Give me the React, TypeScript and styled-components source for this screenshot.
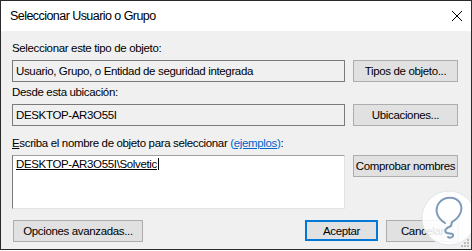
import React from 'react';
import styled, { createGlobalStyle } from 'styled-components';

const GlobalStyle = createGlobalStyle`
  html, body {
    margin: 0;
    padding: 0;
    background: #ffffff;
  }
  body {
    font-family: "Segoe UI", "Liberation Sans", Arial, sans-serif;
    font-size: 11.5px;
    color: #000000;
  }
`;

const Window = styled.div`
  position: relative;
  width: 472px;
  height: 250px;
  box-sizing: border-box;
  border: 1px solid #2b2b2b;
  background: #f0f0f0;
  display: flex;
  flex-direction: column;
  overflow: hidden;
`;

const TitleBar = styled.div`
  height: 30px;
  background: #ffffff;
  display: flex;
  align-items: center;
  justify-content: space-between;
  padding: 0 8px 0 9px;
`;

const Title = styled.span`
  font-size: 12.5px;
  letter-spacing: -0.55px;
  color: #000000;
`;

const Body = styled.div`
  flex: 1;
  display: flex;
  flex-direction: column;
  padding: 10px 12px 0 11px;
`;

const Label = styled.div<{ $top?: number }>`
  height: 15px;
  line-height: 15px;
  margin-top: ${(p) => p.$top ?? 0}px;
  margin-bottom: 4px;
  white-space: nowrap;
  letter-spacing: -0.35px;
`;

const Row = styled.div`
  display: grid;
  grid-template-columns: 333px 105px;
  column-gap: 8px;
  align-items: start;
`;

const ReadOnlyBox = styled.div`
  height: 22px;
  box-sizing: border-box;
  border: 1px solid #7a7a7a;
  background: #f0f0f0;
  padding: 0 3px;
  line-height: 20px;
  white-space: nowrap;
  letter-spacing: -0.35px;
  overflow: hidden;
`;

const EditArea = styled.div`
  height: 54px;
  box-sizing: border-box;
  border-top: 1px solid #a0a0a0;
  border-left: 1px solid #7a7a7a;
  border-right: 1px solid #e3e3e3;
  border-bottom: 1px solid #e3e3e3;
  background: #ffffff;
  padding: 1px 3px;
  line-height: 15px;
  letter-spacing: -0.35px;
`;

const Resolved = styled.span`
  text-decoration: underline;
  border-right: 1px solid #000000;
  padding-right: 1px;
`;

const Button = styled.button<{ $width?: number; $default?: boolean }>`
  width: ${(p) => (p.$width ? `${p.$width}px` : '100%')};
  height: ${(p) => (p.$default ? 21 : 22)}px;
  box-sizing: border-box;
  margin: 0;
  padding: 0;
  background: #e1e1e1;
  border: ${(p) => (p.$default ? '2px solid #0078d7' : '1px solid #adadad')};
  font-family: inherit;
  font-size: 11.5px;
  letter-spacing: -0.35px;
  color: #000000;
  white-space: nowrap;
`;

const Link = styled.span`
  color: #0066cc;
`;

const LinkText = styled.span`
  text-decoration: underline;
`;

const Footer = styled.div`
  display: flex;
  align-items: center;
  margin-top: 11px;
  padding-left: 1px;
`;

const FooterRight = styled.div`
  margin-left: auto;
  display: flex;
  gap: 8px;
`;

const Watermark = styled.svg`
  position: absolute;
  right: -8px;
  bottom: 1px;
`;

const Grip = styled.svg`
  position: absolute;
  right: 1px;
  bottom: 1px;
`;

const CloseIcon = () => (
  <svg width="12" height="12" viewBox="0 0 12 12">
    <path d="M1 1 L11 11 M11 1 L1 11" stroke="#000" strokeWidth="1" fill="none" />
  </svg>
);

const App = () => {
  return (
    <>
      <GlobalStyle />
      <Window>
        <TitleBar>
          <Title>Seleccionar Usuario o Grupo</Title>
          <CloseIcon />
        </TitleBar>
        <Body>
          <Label>Seleccionar este tipo de objeto:</Label>
          <Row>
            <ReadOnlyBox>Usuario, Grupo, o Entidad de seguridad integrada</ReadOnlyBox>
            <Button>Tipos de objeto...</Button>
          </Row>
          <Label $top={3}>Desde esta ubicación:</Label>
          <Row>
            <ReadOnlyBox>DESKTOP-AR3O55I</ReadOnlyBox>
            <Button>Ubicaciones...</Button>
          </Row>
          <Label $top={10}>
            <u>E</u>scriba el nombre de objeto para seleccionar{' '}
            <Link>
              (<LinkText>ejemplos</LinkText>)
            </Link>
            :
          </Label>
          <Row>
            <EditArea>
              <Resolved>DESKTOP-AR3O55I\Solvetic</Resolved>
            </EditArea>
            <Button>Comprobar nombres</Button>
          </Row>
          <Footer>
            <Button $width={130}>Opciones avanzadas...</Button>
            <FooterRight>
              <Button $width={73} $default>
                Aceptar
              </Button>
              <Button $width={73}>Cancelar</Button>
            </FooterRight>
          </Footer>
        </Body>
        <Watermark width="60" height="60" viewBox="0 0 60 60">
          <circle cx="30" cy="30" r="27" fill="#ffffff" fillOpacity="0.88" stroke="#dfe6ee" strokeWidth="1" />
          <path
            d="M26 35 C18 30 15 22 20 15 C25 8 37 8 41 15 C45 22 40 30 33 34 L32 38 C27 40 24 43 28 45 C31 46 35 45 34 48 C33 50 30 50 29 49"
            fill="none"
            stroke="#7d9bb8"
            strokeWidth="2"
            strokeLinecap="round"
          />
        </Watermark>
        <Grip width="10" height="10" viewBox="0 0 10 10">
          <g fill="#bcbcbc">
            <rect x="7" y="1" width="2" height="2" />
            <rect x="4" y="4" width="2" height="2" />
            <rect x="7" y="4" width="2" height="2" />
            <rect x="1" y="7" width="2" height="2" />
            <rect x="4" y="7" width="2" height="2" />
            <rect x="7" y="7" width="2" height="2" />
          </g>
        </Grip>
      </Window>
    </>
  );
};

export default App;
